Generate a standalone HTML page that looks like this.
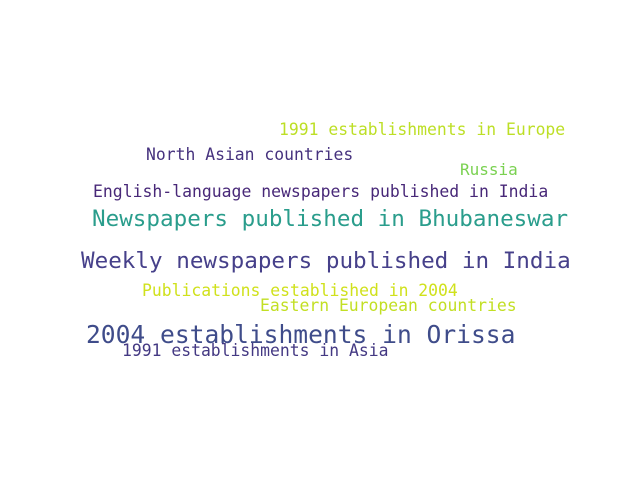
<!DOCTYPE html>
<html><head><meta charset="utf-8"><style>
html,body{margin:0;padding:0;background:#fff;width:640px;height:480px;overflow:hidden}
div{position:absolute;font-family:"DejaVu Sans Mono","Liberation Mono",monospace;line-height:1;white-space:nowrap}
</style></head><body>
<div style="left:279px;top:122px;font-size:16.4px;color:#bddf26">1991 establishments in Europe</div>
<div style="left:146px;top:147px;font-size:16.4px;color:#46327e">North Asian countries</div>
<div style="left:460px;top:162px;font-size:16px;color:#7ad151">Russia</div>
<div style="left:93px;top:184px;font-size:16.45px;color:#482878">English-language newspapers published in India</div>
<div style="left:92px;top:208px;font-size:22.6px;color:#2a9d8c">Newspapers published in Bhubaneswar</div>
<div style="left:81px;top:250px;font-size:22.6px;color:#46408a">Weekly newspapers published in India</div>
<div style="left:142px;top:283px;font-size:16.4px;color:#d0e11c">Publications established in 2004</div>
<div style="left:260px;top:298px;font-size:16.4px;color:#c2df23">Eastern European countries</div>
<div style="left:86px;top:323px;font-size:24.6px;color:#3f4c8a">2004 establishments in Orissa</div>
<div style="left:122px;top:343px;font-size:16.4px;color:#443983">1991 establishments in Asia</div>
</body></html>
